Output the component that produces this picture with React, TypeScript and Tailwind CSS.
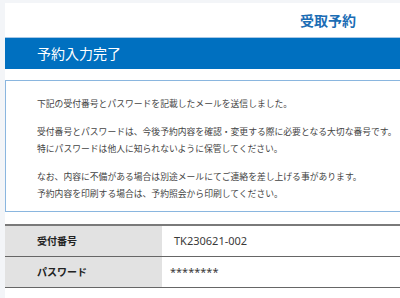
export default function App() {
  const font = { fontFamily: '"Noto Sans", "Noto Sans CJK JP", sans-serif' }
  return (
    <div className="h-[298px] w-[400px] overflow-hidden bg-[#f3f5f8] pl-[5px] pt-[3px]" style={font}>
      <div className="w-[560px] bg-white pb-[20px]">
        {/* Header */}
        <div className="flex h-[34px] items-center pl-[295px]">
          <span className="text-[14px] font-bold text-[#1b6db5]">受取予約</span>
        </div>

        {/* Title bar */}
        <div className="flex h-[32px] items-center border-t border-[#a8c8e6] bg-[#0070c0] pl-[32px]">
          <span className="text-[14px] text-white">予約入力完了</span>
        </div>

        {/* Message box */}
        <div className="mt-[11px] border border-[#8ab6df] pb-[8px] pl-[31px] pt-[15px] text-[8.8px] leading-[17px] text-[#444]">
          <p>下記の受付番号とパスワードを記載したメールを送信しました。</p>
          <p className="mt-[11px]">受付番号とパスワードは、今後予約内容を確認・変更する際に必要となる大切な番号です。</p>
          <p>特にパスワードは他人に知られないように保管してください。</p>
          <p className="mt-[11px]">なお、内容に不備がある場合は別途メールにてご連絡を差し上げる事があります。</p>
          <p>予約内容を印刷する場合は、予約照会から印刷してください。</p>
        </div>

        {/* Result table */}
        <div className="mt-[12px] border-t-2 border-[#7a7a7a]">
          <div className="flex h-[31px] border-b border-[#666]">
            <div className="flex w-[157px] items-center bg-[#e2e2e2] pl-[32px] text-[10px] font-bold text-[#222]">受付番号</div>
            <div className="flex items-center pl-[12px] text-[11px] text-[#3a3a3a]">TK230621-002</div>
          </div>
          <div className="flex h-[31px] border-b border-[#666]">
            <div className="flex w-[157px] items-center bg-[#e2e2e2] pl-[32px] text-[10px] font-bold text-[#222]">パスワード</div>
            <div className="flex items-center pl-[8px] text-[11px] text-[#3a3a3a]">********</div>
          </div>
        </div>
      </div>
    </div>
  )
}
